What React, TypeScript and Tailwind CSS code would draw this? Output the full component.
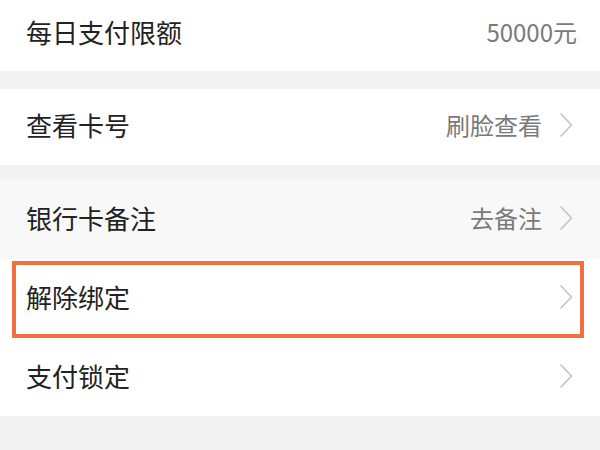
import React from "react";

const Chevron = () => (
  <svg width="14" height="26" viewBox="0 0 14 26" fill="none" className="shrink-0">
    <path d="M2 2 L12.5 13 L2 24" stroke="#c6c6c6" strokeWidth="1.7" strokeLinecap="round" strokeLinejoin="round" />
  </svg>
);

type RowProps = {
  label: string;
  value?: string;
  chevron?: boolean;
  h: string;
  bg?: string;
  pb?: string;
  highlight?: boolean;
};

const Row = ({ label, value, chevron, h, bg = "bg-white", pb = "pb-[4px]", highlight }: RowProps) => (
  <div className={`relative flex items-center justify-between pl-[26px] ${chevron ? "pr-[27px]" : "pr-[23px]"} ${h} ${bg} ${pb}`}>
    <span className="text-[26px] leading-none text-[#222222]">{label}</span>
    <div className="flex items-center gap-[17px]">
      {value && <span className="text-[24px] leading-none text-[#7a7a7a]">{value}</span>}
      {chevron && <Chevron />}
    </div>
    {highlight && (
      <div className="pointer-events-none absolute left-[12px] right-[16px] top-[2px] bottom-0 border-[4px] border-[#f2703f]" />
    )}
  </div>
);

export default function App() {
  return (
    <div
      className="w-[600px] h-[450px] overflow-hidden bg-[#f3f3f3] flex flex-col"
      style={{ fontFamily: '"Noto Sans CJK SC", "Noto Sans", sans-serif' }}
    >
      <Row label="每日支付限额" value="50000元" h="h-[71px]" pb="pb-[8px]" />
      <div className="h-[18px] shrink-0" />
      <Row label="查看卡号" value="刷脸查看" chevron h="h-[76px]" />
      <div className="h-[15px] shrink-0" />
      <Row label="银行卡备注" value="去备注" chevron h="h-[79px]" bg="bg-[#f8f8f8]" />
      <Row label="解除绑定" chevron h="h-[79px]" highlight />
      <Row label="支付锁定" chevron h="h-[78px]" pb="pb-[2px]" />
    </div>
  );
}
